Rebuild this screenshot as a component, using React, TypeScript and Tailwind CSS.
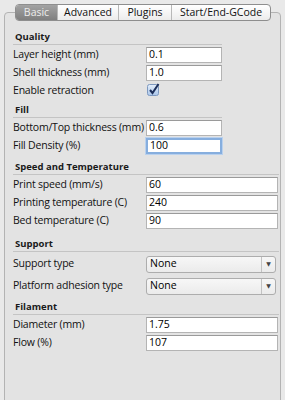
import React from "react";

const font = { fontFamily: '"Open Sans", "DejaVu Sans", sans-serif' };

const tabs = [
    { name: "Basic", w: "w-[41px]", active: true },
    { name: "Advanced", w: "w-[61px]" },
    { name: "Plugins", w: "w-[53px]" },
    { name: "Start/End-GCode", w: "w-[99px]" },
];

const Header = ({ title, wide, mt }: { title: string; wide?: boolean; mt: string }) => (
    <div className={`${mt} ${wide ? "w-[266px]" : "w-[209px]"} border-b border-[#c4c4c4] mb-[1px]`}>
        <div className="pl-[2px] h-[14px] leading-[14px] text-[9.5px] font-bold text-[#1a1a1a]">{title}</div>
    </div>
);

const Field = ({
    label,
    value,
    wide,
    focused,
}: {
    label: string;
    value: string;
    wide?: boolean;
    focused?: boolean;
}) => (
    <div className="flex items-center h-[18px]">
        <div className="w-[133px] text-[10.5px] tracking-[-0.2px] text-[#111] whitespace-nowrap">{label}</div>
        <div
            className={`${wide ? "w-[132px]" : "w-[76px]"} h-[16px] bg-white flex items-center pl-[2px] text-[10.5px] ${
                focused
                    ? "border-2 border-[#86aede] outline outline-1 outline-[#b9d1ee]"
                    : "border border-[#b4b4b4] border-t-[#9a9a9a]"
            }`}
        >
            {value}
        </div>
    </div>
);

const Select = ({ label, value }: { label: string; value: string }) => (
    <div className="flex items-center h-[22px]">
        <div className="w-[133px] text-[10.5px] tracking-[-0.2px] text-[#111] whitespace-nowrap">{label}</div>
        <div className="w-[130px] h-[17px] flex items-stretch rounded-[3px] border border-[#adadad] bg-gradient-to-b from-[#f7f7f7] to-[#ebebeb] text-[10.5px]">
            <div className="flex-1 flex items-center pl-[3px]">{value}</div>
            <div className="w-[14px] border-l border-[#c2c2c2] flex items-center justify-center">
                <span className="text-[6px] text-[#444] leading-none">▼</span>
            </div>
        </div>
    </div>
);

export default function App() {
    return (
        <div className="w-[285px] h-[400px] bg-[#e9e9e9] overflow-hidden pt-[12px]" style={font}>
            <div className="ml-[4px] w-[277px] h-[400px] border border-[#b3b3b3] rounded-t-[4px] bg-[#e3e3e3]">
                <div className="-mt-[9px] ml-[10px] flex h-[17px] w-[256px] rounded-[4px] border border-[#8e8e8e] bg-gradient-to-b from-[#ffffff] to-[#ececec] overflow-hidden">
                    {tabs.map((t, i) => (
                        <div
                            key={t.name}
                            className={`${t.w} flex items-center justify-center text-[10.5px] ${
                                t.active
                                    ? "bg-gradient-to-b from-[#a3a3a3] to-[#7f7f7f] text-[#ececec]"
                                    : "text-[#111]"
                            } ${i > 0 ? "border-l border-[#b8b8b8]" : ""}`}
                        >
                            {t.name}
                        </div>
                    ))}
                </div>
                <div className="pl-[8px]">
                    <Header title="Quality" mt="mt-[9px]" />
                    <Field label="Layer height (mm)" value="0.1" />
                    <Field label="Shell thickness (mm)" value="1.0" />
                    <div className="flex items-start h-[18px]">
                        <div className="w-[133px] text-[10.5px] tracking-[-0.2px] text-[#111] leading-[14px] mt-[1px]">Enable retraction</div>
                        <svg width="14" height="14" viewBox="0 0 14 14" className="ml-[1px] mt-[1px]">
                            <defs>
                                <linearGradient id="cb" x1="0" y1="0" x2="0" y2="1">
                                    <stop offset="0" stopColor="#e4eefa" />
                                    <stop offset="1" stopColor="#aac6ea" />
                                </linearGradient>
                            </defs>
                            <rect x="0.5" y="1.5" width="11" height="11" rx="2" fill="url(#cb)" stroke="#7d98bf" />
                            <path d="M3 7 L5.5 10 L11.5 1" fill="none" stroke="#1d2f5a" strokeWidth="2" />
                        </svg>
                    </div>
                    <Header title="Fill" mt="mt-[3px]" />
                    <Field label="Bottom/Top thickness (mm)" value="0.6" />
                    <Field label="Fill Density (%)" value="100" focused />
                    <Header title="Speed and Temperature" wide mt="mt-[5px]" />
                    <Field label="Print speed (mm/s)" value="60" wide />
                    <Field label="Printing temperature (C)" value="240" wide />
                    <Field label="Bed temperature (C)" value="90" wide />
                    <Header title="Support" wide mt="mt-[7px]" />
                    <Select label="Support type" value="None" />
                    <Select label="Platform adhesion type" value="None" />
                    <Header title="Filament" wide mt="mt-[3px]" />
                    <Field label="Diameter (mm)" value="1.75" wide />
                    <Field label="Flow (%)" value="107" wide />
                </div>
            </div>
        </div>
    );
}
